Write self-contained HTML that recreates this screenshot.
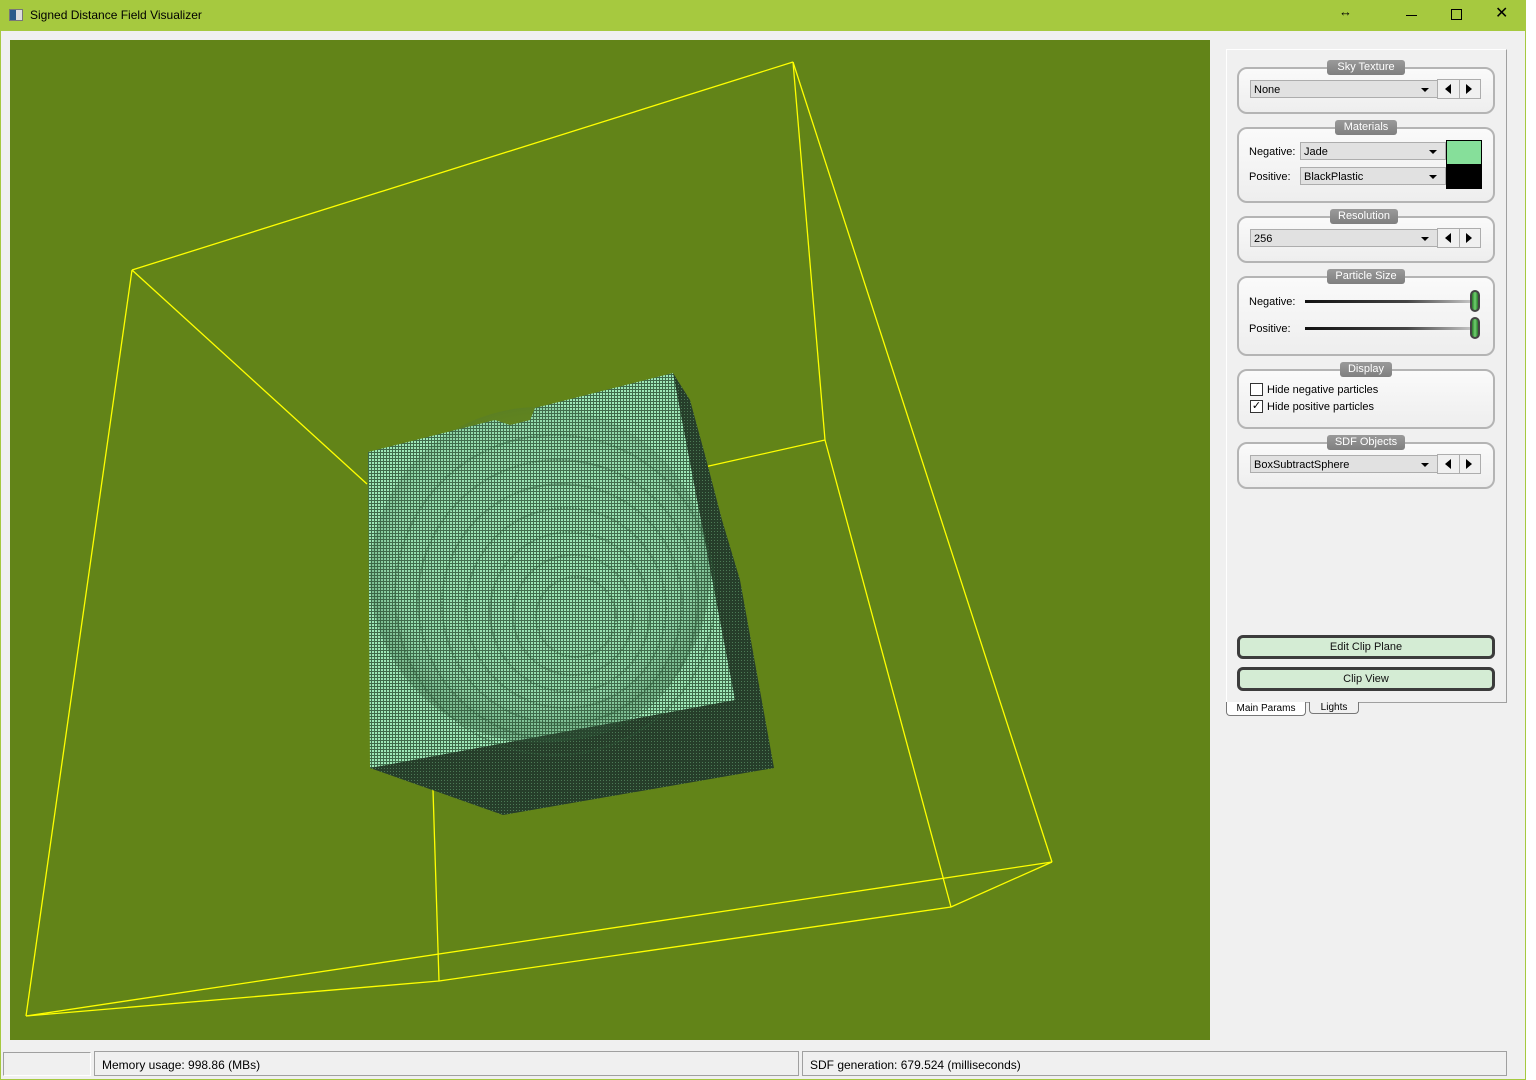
<!DOCTYPE html>
<html><head><meta charset="utf-8"><style>
*{margin:0;padding:0;box-sizing:border-box}
body{width:1536px;height:1080px;background:#fff;position:relative;overflow:hidden;font-family:"Liberation Sans",sans-serif;font-size:11px;color:#000}
.abs{position:absolute}
#win{left:0;top:0;width:1526px;height:1080px;background:#f0f0f0;border:1px solid #a6c93f;border-top:none}
#title{left:0;top:0;width:1526px;height:31px;background:#a6c93f}
.grp{position:absolute;left:1237px;width:258px;border:2px solid #b4b4b4;border-radius:10px;background:linear-gradient(#fafafa,#eeeeee)}
.gt{position:absolute;top:-9px;height:15px;background:linear-gradient(#9a9a9a,#7f7f7f);color:#fff;border-radius:3px;font-size:11px;text-align:center;line-height:15px}
.cb{position:absolute;height:18px;background:#e1e1e1;border:1px solid #adadad;font-size:11px;line-height:18px;padding-left:3px}
.cb:after{content:"";position:absolute;right:8px;top:7px;border-left:4px solid transparent;border-right:4px solid transparent;border-top:4px solid #000}
.arr{position:absolute;width:44px;height:20px;background:#f0f0f0;border:1px solid #adadad}
.arr:before{content:"";position:absolute;left:7px;top:4px;border-top:5px solid transparent;border-bottom:5px solid transparent;border-right:6px solid #000}
.arr:after{content:"";position:absolute;left:28px;top:4px;border-top:5px solid transparent;border-bottom:5px solid transparent;border-left:6px solid #000}
.arr i{position:absolute;left:21px;top:0;width:1px;height:18px;background:#adadad}
.lbl{position:absolute;font-size:11px}
.sl{position:absolute;left:1305px;width:170px;height:3px;background:linear-gradient(90deg,#111,#444 60%,#ccc)}
.kn{position:absolute;left:1470px;width:10px;height:22px;border:2px solid #444;border-radius:5px;background:linear-gradient(90deg,#2a7a2a,#6fd06f,#2a7a2a)}
.btn{position:absolute;left:1237px;width:258px;height:24px;border:3px solid #3c3c3c;border-radius:6px;background:#d4ecd4;text-align:center;line-height:18px;font-size:11px;color:#111}
.chk{position:absolute;width:13px;height:13px;border:1px solid #333;background:#fff}
</style></head><body>
<div id="win" class="abs"></div>
<div id="title" class="abs"></div>
<div class="abs" style="left:9px;top:9px;width:14px;height:12px;border:1px solid #777;background:linear-gradient(90deg,#2a5a8a 50%,#ddd 50%)"></div>
<div class="abs" style="left:30px;top:8px;font-size:12px">Signed Distance Field Visualizer</div>
<div class="abs" style="left:1339px;top:4px;font-size:13px;font-weight:bold">↔</div>
<div class="abs" style="left:1406px;top:15px;width:11px;height:1px;background:#000"></div>
<div class="abs" style="left:1451px;top:9px;width:11px;height:11px;border:1px solid #000"></div>
<div class="abs" style="left:1495px;top:3px;font-size:16px">✕</div>

<svg class="abs" style="left:10px;top:40px" width="1200" height="1000" viewBox="10 40 1200 1000">
<defs>
<pattern id="pf" width="3" height="3" patternUnits="userSpaceOnUse"><rect width="3" height="3" fill="#3f6b4a"/><rect width="2" height="2" fill="#9ee8b8"/></pattern>
<pattern id="pd" width="3" height="3" patternUnits="userSpaceOnUse"><rect width="3" height="3" fill="#263e2a"/><rect width="1" height="1" fill="#4c7a56"/></pattern>
<radialGradient id="bw" cx="0.5" cy="0.45" r="0.5"><stop offset="0" stop-color="#9be3b4" stop-opacity="0"/><stop offset="0.85" stop-color="#4a7a58" stop-opacity="0.12"/><stop offset="1" stop-color="#2f5a3a" stop-opacity="0.3"/></radialGradient>
</defs>
<rect x="10" y="40" width="1200" height="1000" fill="#628418"/>
<g stroke="#ffff00" stroke-width="1.3" fill="none">
<line x1="793" y1="62" x2="132" y2="270"/><line x1="793" y1="62" x2="1052" y2="862"/><line x1="793" y1="62" x2="825" y2="440"/>
<line x1="132" y1="270" x2="26" y2="1016"/><line x1="132" y1="270" x2="367" y2="484"/>
<line x1="825" y1="440" x2="700" y2="468"/><line x1="825" y1="440" x2="951" y2="907"/>
<line x1="26" y1="1016" x2="1052" y2="862"/><polyline points="26,1016 439,981 951,907 1052,862"/>
<line x1="433" y1="790" x2="439" y2="981"/>
</g>
<polygon points="673,373 690,400 705,455 722,520 740,580 774,768 503,815 370,768" fill="url(#pd)"/>
<polygon points="368,452 495,420 510,425 530,420 535,408 673,373 735,700 370,768" fill="url(#pf)"/>
<ellipse cx="540" cy="575" rx="170" ry="168" fill="url(#bw)"/>
<g fill="none" stroke="#2f5a3a" stroke-opacity="0.45" stroke-width="2" stroke-dasharray="2 1">
<circle cx="555" cy="595" r="160"/><circle cx="558" cy="600" r="140"/><circle cx="562" cy="604" r="120"/><circle cx="566" cy="608" r="100"/><circle cx="570" cy="612" r="80"/><circle cx="573" cy="615" r="60"/><circle cx="576" cy="617" r="40"/>
</g>
</svg>

<div class="abs" style="left:1226px;top:49px;width:281px;height:654px;border:1px solid #a0a0a0;background:#f0f0f0;border-top-color:#fff;border-left-color:#fff"></div>

<div class="grp" style="top:67px;height:47px"><div class="gt" style="left:88px;width:78px">Sky Texture</div></div>
<div class="cb" style="left:1250px;top:80px;width:188px">None</div>
<div class="arr" style="left:1437px;top:79px"><i></i></div>

<div class="grp" style="top:127px;height:76px"><div class="gt" style="left:96px;width:62px">Materials</div></div>
<div class="lbl" style="left:1249px;top:146px">Negative:</div>
<div class="cb" style="left:1300px;top:142px;width:146px">Jade</div>
<div class="lbl" style="left:1249px;top:171px">Positive:</div>
<div class="cb" style="left:1300px;top:167px;width:146px">BlackPlastic</div>
<div class="abs" style="left:1446px;top:140px;width:36px;height:25px;background:#86df9a;border:1px solid #000"></div>
<div class="abs" style="left:1446px;top:165px;width:36px;height:24px;background:#000"></div>

<div class="grp" style="top:216px;height:47px"><div class="gt" style="left:91px;width:68px">Resolution</div></div>
<div class="cb" style="left:1250px;top:229px;width:188px">256</div>
<div class="arr" style="left:1437px;top:228px"><i></i></div>

<div class="grp" style="top:276px;height:80px"><div class="gt" style="left:88px;width:78px">Particle Size</div></div>
<div class="lbl" style="left:1249px;top:296px">Negative:</div>
<div class="sl" style="top:300px"></div><div class="kn" style="top:290px"></div>
<div class="lbl" style="left:1249px;top:323px">Positive:</div>
<div class="sl" style="top:327px"></div><div class="kn" style="top:317px"></div>

<div class="grp" style="top:369px;height:60px"><div class="gt" style="left:101px;width:52px">Display</div></div>
<div class="chk" style="left:1250px;top:383px"></div><div class="lbl" style="left:1267px;top:384px">Hide negative particles</div>
<div class="chk" style="left:1250px;top:400px;font-size:11px;line-height:11px;text-align:center">✓</div><div class="lbl" style="left:1267px;top:401px">Hide positive particles</div>

<div class="grp" style="top:442px;height:47px"><div class="gt" style="left:88px;width:78px">SDF Objects</div></div>
<div class="cb" style="left:1250px;top:455px;width:188px">BoxSubtractSphere</div>
<div class="arr" style="left:1437px;top:454px"><i></i></div>

<div class="btn" style="top:635px">Edit Clip Plane</div>
<div class="btn" style="top:667px">Clip View</div>

<div class="abs" style="left:1226px;top:702px;width:80px;height:14px;background:#fff;border:1px solid #777;border-top:none;border-radius:0 0 4px 4px;font-size:10px;text-align:center;line-height:13px">Main Params</div>
<div class="abs" style="left:1309px;top:702px;width:50px;height:12px;background:#f0f0f0;border:1px solid #777;border-top:none;border-radius:0 0 4px 4px;font-size:10px;text-align:center;line-height:11px">Lights</div>

<div class="abs" style="left:3px;top:1052px;width:88px;height:24px;border:1px solid #a0a0a0;border-right-color:#fff;border-bottom-color:#fff"></div>
<div class="abs" style="left:94px;top:1051px;width:705px;height:25px;border:1px solid #a0a0a0;padding:6px 0 0 7px;font-size:12px">Memory usage: 998.86 (MBs)</div>
<div class="abs" style="left:802px;top:1051px;width:705px;height:25px;border:1px solid #a0a0a0;padding:6px 0 0 7px;font-size:12px">SDF generation: 679.524 (milliseconds)</div>
</body></html>
